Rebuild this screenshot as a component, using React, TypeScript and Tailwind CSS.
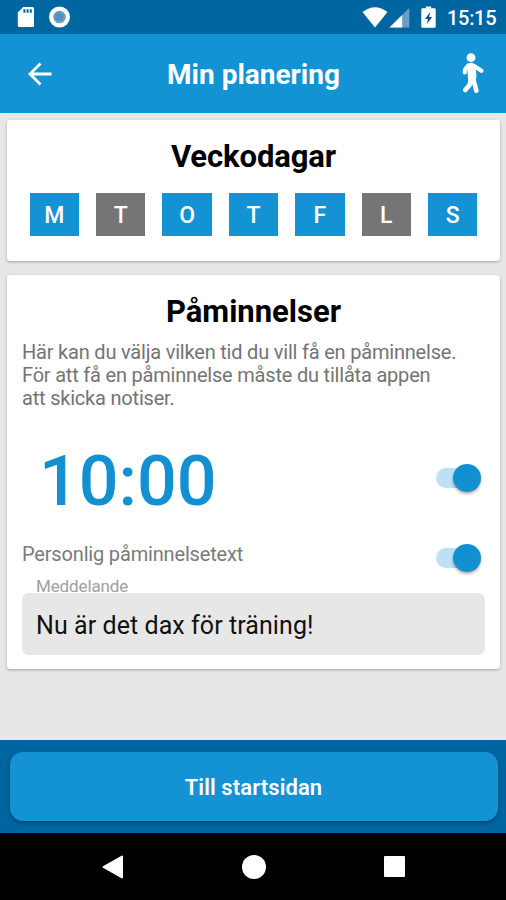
const days = [
  { letter: "M", on: true },
  { letter: "T", on: false },
  { letter: "O", on: true },
  { letter: "T", on: true },
  { letter: "F", on: true },
  { letter: "L", on: false },
  { letter: "S", on: true },
];

const card =
  "rounded-[3px] bg-white shadow-[0_1px_3px_rgba(0,0,0,0.3)]";

function StatusBar() {
  return (
    <div className="flex h-[34px] items-center bg-[#0066a1] text-white">
      <svg className="ml-[17px] h-[22px] w-[18px]" viewBox="0 0 18 22">
        <path d="M6.2 1H15.5Q17 1 17 2.5V19.5Q17 21 15.5 21H2.3Q.8 21 .8 19.5V6.5Z" fill="#fff" />
        <path d="M6.4 3.2h2v3.6h-2zM9.6 3.2h2v3.6h-2zM12.8 3.2h2v3.6h-2z" fill="#0066a1" />
      </svg>
      <svg className="ml-[13px] h-[22px] w-[22px]" viewBox="0 0 22 22">
        <circle cx="11.5" cy="11" r="8.4" fill="#699fc4" stroke="#fff" strokeWidth="4.2" />
        <circle cx="11.5" cy="11" r="4" fill="#5590ba" />
      </svg>
      <svg className="ml-auto h-[22px] w-[26px]" viewBox="0 0 26 22">
        <path d="M.5 6Q13-3.5 25.5 6L13 21.5Z" fill="#fff" />
      </svg>
      <svg className="ml-[1px] h-[22px] w-[21px]" viewBox="0 0 21 22">
        <path d="M.5 21.5L20.3 2V21.5Z" fill="#689fc6" />
        <path d="M.5 21.5L13.2 9V21.5Z" fill="#fff" />
      </svg>
      <svg className="ml-[11px] h-[22px] w-[16px]" viewBox="0 0 16 22">
        <path d="M4.8 .5h5.4v1.8h3.3q1.2 0 1.2 1.2v17q0 1.2-1.2 1.2h-12q-1.2 0-1.2-1.2v-17q0-1.2 1.2-1.2h3.3z" fill="#fff" />
        <path d="M9.3 5.8L4 13h3.1L5.8 18.2 11.2 10.9H8z" fill="#17479a" />
      </svg>
      <span className="mr-[10px] ml-[10px] w-[49px] pt-[2px] text-[20px] leading-none font-medium tracking-[-0.3px] whitespace-nowrap">
        15:15
      </span>
    </div>
  );
}

function Header() {
  return (
    <header className="flex h-[79px] items-center bg-[#1392d4] text-white">
      <svg className="ml-[28px] h-[24px] w-[25px]" viewBox="0 0 25 24" fill="none" stroke="#fff" strokeWidth="2.8">
        <path d="M23.5 12H3M12.5 1.5L2 12 12.5 22.5" />
      </svg>
      <h1 className="flex-1 pr-[6px] pt-[3px] text-center text-[28px] leading-none font-bold whitespace-nowrap">
        Min planering
      </h1>
      <svg className="mr-[22px] h-[43px] w-[24px]" viewBox="0 0 24 43" fill="none" stroke="#fff" strokeLinecap="round" strokeLinejoin="round">
        <circle cx="11" cy="5.7" r="4.4" fill="#fff" stroke="none" />
        <path d="M8.6 13.5Q11 11 14 13.5L15 25 13.2 29.5 9.6 27.5Z" fill="#fff" strokeWidth="3" />
        <path d="M8.2 13.5L5 17.5 4.8 20.4M14 14L21.4 18.8" strokeWidth="4.2" />
        <path d="M10.8 28L9.6 33 5.2 38M13.4 27.5L16.4 38.8" strokeWidth="4.6" />
      </svg>
    </header>
  );
}

function Toggle() {
  return (
    <div className="flex h-[20px] w-[40px] items-center rounded-full bg-[#bde0f4]">
      <div className="ml-[17px] size-[28px] shrink-0 rounded-full bg-[#1390d0] shadow-[0_2px_3px_rgba(0,0,0,0.3)]" />
    </div>
  );
}

export default function App() {
  return (
    <div className="flex h-[900px] w-[506px] flex-col overflow-hidden bg-[#e7e7e7] font-[Roboto,sans-serif]">
      <StatusBar />
      <Header />
      <main className="flex flex-1 flex-col gap-[14px] pr-[6px] pl-[7px] pt-[7px]">
        <section className={`${card} h-[141px] px-[22.5px] pt-[20px]`}>
          <h2 className="text-center text-[31px] leading-[34px] font-bold tracking-[-0.1px]">Veckodagar</h2>
          <div className="mt-[19px] flex justify-between">
            {days.map((day, i) => (
              <div
                key={i}
                className={`flex h-[43px] w-[49.5px] items-center justify-center pt-px text-[23px] leading-none font-medium text-white ${
                  day.on ? "bg-[#1392d4]" : "bg-[#757575]"
                }`}
              >
                {day.letter}
              </div>
            ))}
          </div>
        </section>

        <section className={`${card} h-[394px] pr-[15px] pl-[15px] pt-[20px]`}>
          <h2 className="text-center text-[31px] leading-[34px] font-bold">Påminnelser</h2>
          <p className="mt-[12px] text-[20px] leading-[23px] tracking-[-0.2px] whitespace-nowrap text-[#747474]">
            Här kan du välja vilken tid du vill få en påminnelse.
            <br />
            För att få en påminnelse måste du tillåta appen
            <br />
            att skicka notiser.
          </p>
          <div className="mt-[26px] flex h-[84px] items-center justify-between pr-[9px] pl-[17px]">
            <span className="pt-[6px] text-[70px] leading-none font-medium text-[#1390d0]">10:00</span>
            <Toggle />
          </div>
          <div className="mt-[20px] flex h-[36px] items-center justify-between pr-[9px]">
            <span className="pb-[9px] text-[20px] leading-[24px] tracking-[-0.17px] text-[#7a7a7a]">
              Personlig påminnelsetext
            </span>
            <Toggle />
          </div>
          <div className="flex h-[17px] items-start pl-[14px] text-[17px] leading-[20px] tracking-[-0.13px] text-[#a0a0a0]">
            Meddelande
          </div>
          <div className="flex h-[62px] items-center rounded-[7px] bg-[#e7e7e7] pt-[2px] pl-[14px] text-[25px] leading-none tracking-[0.07px] text-[#111]">
            <span>Nu är det dax för träning!</span>
          </div>
        </section>
      </main>
      <footer className="flex h-[93px] flex-col bg-[#0066a1] pr-[8.5px] pl-[9.5px] pt-[12px]">
        <button className="h-[69px] rounded-[13px] bg-[#1392d4] pt-[3px] text-[22px] leading-none font-semibold tracking-[0.1px] text-white shadow-[0_2px_4px_rgba(0,0,0,0.35)]">
          Till startsidan
        </button>
      </footer>
      <nav className="flex h-[67px] items-center bg-black">
        <svg className="ml-[102px] h-[24px] w-[22px]" viewBox="0 0 22 24">
          <path d="M1.5 12L20 1.5V22.5Z" fill="#fff" stroke="#fff" strokeWidth="2" strokeLinejoin="round" />
        </svg>
        <div className="ml-[118px] size-[24px] rounded-full bg-white" />
        <div className="ml-[118px] size-[21px] rounded-[1px] bg-white" />
      </nav>
    </div>
  );
}
